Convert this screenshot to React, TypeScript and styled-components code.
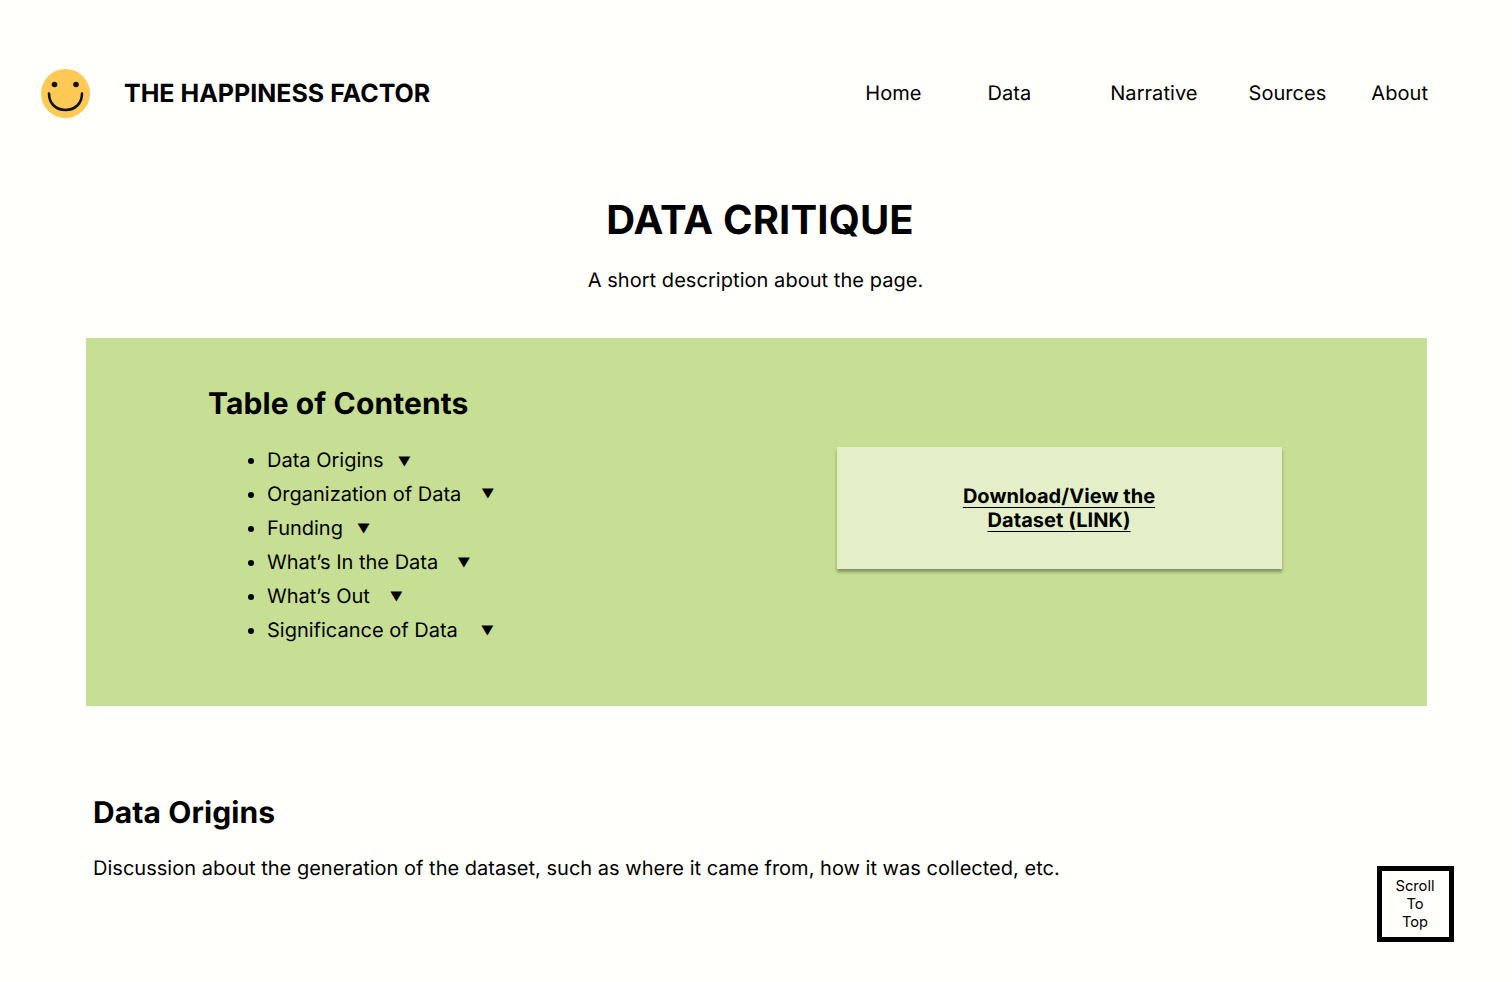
import React from 'react';
import styled, { createGlobalStyle } from 'styled-components';

const GlobalStyle = createGlobalStyle`
  html, body {
    margin: 0;
    padding: 0;
    background: #fffffb;
    color: #000;
    font-family: Inter, "Liberation Sans", sans-serif;
    text-rendering: geometricPrecision;
  }
`;

const Page = styled.div`
  width: 1512px;
  height: 982px;
  overflow: hidden;
  box-sizing: border-box;
  padding-top: 69px;
`;

const Header = styled.header`
  display: flex;
  align-items: center;
  justify-content: space-between;
  height: 49px;
  padding: 0 84px 0 41px;
`;

const Brand = styled.div`
  display: flex;
  align-items: center;
  gap: 34px;
`;

const BrandName = styled.div`
  padding-top: 2px;
  font-size: 25px;
  font-weight: 700;
  line-height: 49px;
`;

const Nav = styled.nav`
  display: flex;
`;

const NavLink = styled.a<{ $gap: number }>`
  font-size: 20px;
  line-height: 49px;
  letter-spacing: 0.05px;
  color: #000;
  margin-left: ${(p) => p.$gap}px;
`;

const Hero = styled.div`
  margin-top: 77px;
  text-align: center;
`;

const Title = styled.h1`
  margin: 0;
  font-size: 40px;
  font-weight: 700;
  line-height: 50px;
  letter-spacing: 0.15px;
  padding-left: 8px;
`;

const Description = styled.p`
  margin: 23px 0 0;
  font-size: 20px;
  line-height: 24px;
  letter-spacing: 0.05px;
  padding-right: 1px;
`;

const Panel = styled.section`
  display: flex;
  justify-content: space-between;
  box-sizing: border-box;
  width: 1341px;
  height: 368px;
  margin: 46px 0 0 86px;
  padding: 47px 145px 0 122px;
  background: #c7df94;
`;

const Contents = styled.div``;

const ContentsTitle = styled.h2`
  margin: 0;
  font-size: 30px;
  font-weight: 700;
  line-height: 38px;
  letter-spacing: 0.1px;
`;

const ContentsList = styled.ul`
  margin: 20px 0 0;
  padding: 0 0 0 59px;
  font-size: 20px;
  line-height: 34px;
`;

const ContentsItem = styled.li``;

const Arrow = styled.span<{ $gap: number; $lift: number }>`
  display: inline-block;
  margin-left: ${(p) => p.$gap}px;
  font-size: 13px;
  line-height: 1;
  vertical-align: ${(p) => p.$lift}px;
`;

const DownloadCard = styled.div`
  display: flex;
  align-items: center;
  justify-content: center;
  width: 445px;
  height: 122px;
  margin-top: 62px;
  background: #e4efc9;
  box-shadow: 0 3px 3px rgba(0, 0, 0, 0.35);
`;

const DownloadLink = styled.a`
  width: 220px;
  padding-right: 1px;
  font-size: 20px;
  font-weight: 700;
  line-height: 24px;
  letter-spacing: 0.05px;
  text-align: center;
  color: #000;
  text-decoration: underline;
  text-decoration-skip-ink: none;
  text-decoration-thickness: 1.4px;
  text-underline-offset: 4px;
`;

const Section = styled.section`
  padding: 88px 0 0 93px;
`;

const SectionTitle = styled.h2`
  margin: 0;
  font-size: 30px;
  font-weight: 700;
  line-height: 38px;
  letter-spacing: 0.1px;
`;

const SectionText = styled.p`
  margin: 24px 0 0;
  font-size: 20px;
  line-height: 24px;
  letter-spacing: 0.015px;
`;

const ScrollTop = styled.button`
  position: fixed;
  left: 1377px;
  top: 866px;
  box-sizing: border-box;
  width: 77px;
  height: 76px;
  padding: 0 1px 0 0;
  border: 5px solid #000;
  background: #fffffb;
  font-family: Inter, "Liberation Sans", sans-serif;
  font-size: 14.7px;
  line-height: 18px;
  color: #000;
`;

const navItems = [
  { label: 'Home', gap: 0 },
  { label: 'Data', gap: 66 },
  { label: 'Narrative', gap: 79 },
  { label: 'Sources', gap: 51 },
  { label: 'About', gap: 45 },
];

const contents = [
  { label: 'Data Origins', gap: 14, lift: 1 },
  { label: 'Organization of Data', gap: 20, lift: 3 },
  { label: 'Funding', gap: 14, lift: 2 },
  { label: 'What’s In the Data', gap: 19, lift: 2 },
  { label: 'What’s Out', gap: 20, lift: 2 },
  { label: 'Significance of Data', gap: 23, lift: 2 },
];

const App = () => (
  <Page>
    <GlobalStyle />
    <Header>
      <Brand>
        <svg width="49" height="49" viewBox="0 0 49 49">
          <circle cx="24.5" cy="24.5" r="24.5" fill="#fec955" />
          <circle cx="13.5" cy="15.5" r="2.8" fill="#111" />
          <circle cx="35" cy="15.5" r="2.8" fill="#111" />
          <path d="M8 24.5c0 10 7 16.5 16.5 16.5S41 34.5 41 24.5" fill="none" stroke="#111" strokeWidth="2.6" strokeLinecap="round" />
        </svg>
        <BrandName>THE HAPPINESS FACTOR</BrandName>
      </Brand>
      <Nav>
        {navItems.map((item) => (
          <NavLink key={item.label} $gap={item.gap}>{item.label}</NavLink>
        ))}
      </Nav>
    </Header>

    <Hero>
      <Title>DATA CRITIQUE</Title>
      <Description>A short description about the page.</Description>
    </Hero>

    <Panel>
      <Contents>
        <ContentsTitle>Table of Contents</ContentsTitle>
        <ContentsList>
          {contents.map((item) => (
            <ContentsItem key={item.label}>
              {item.label}
              <Arrow $gap={item.gap} $lift={item.lift}>▼</Arrow>
            </ContentsItem>
          ))}
        </ContentsList>
      </Contents>
      <DownloadCard>
        <DownloadLink>Download/View the Dataset (LINK)</DownloadLink>
      </DownloadCard>
    </Panel>

    <Section>
      <SectionTitle>Data Origins</SectionTitle>
      <SectionText>
        Discussion about the generation of the dataset, such as where it came from, how it was collected, etc.
      </SectionText>
    </Section>

    <ScrollTop>Scroll<br />To<br />Top</ScrollTop>
  </Page>
);

export default App;
